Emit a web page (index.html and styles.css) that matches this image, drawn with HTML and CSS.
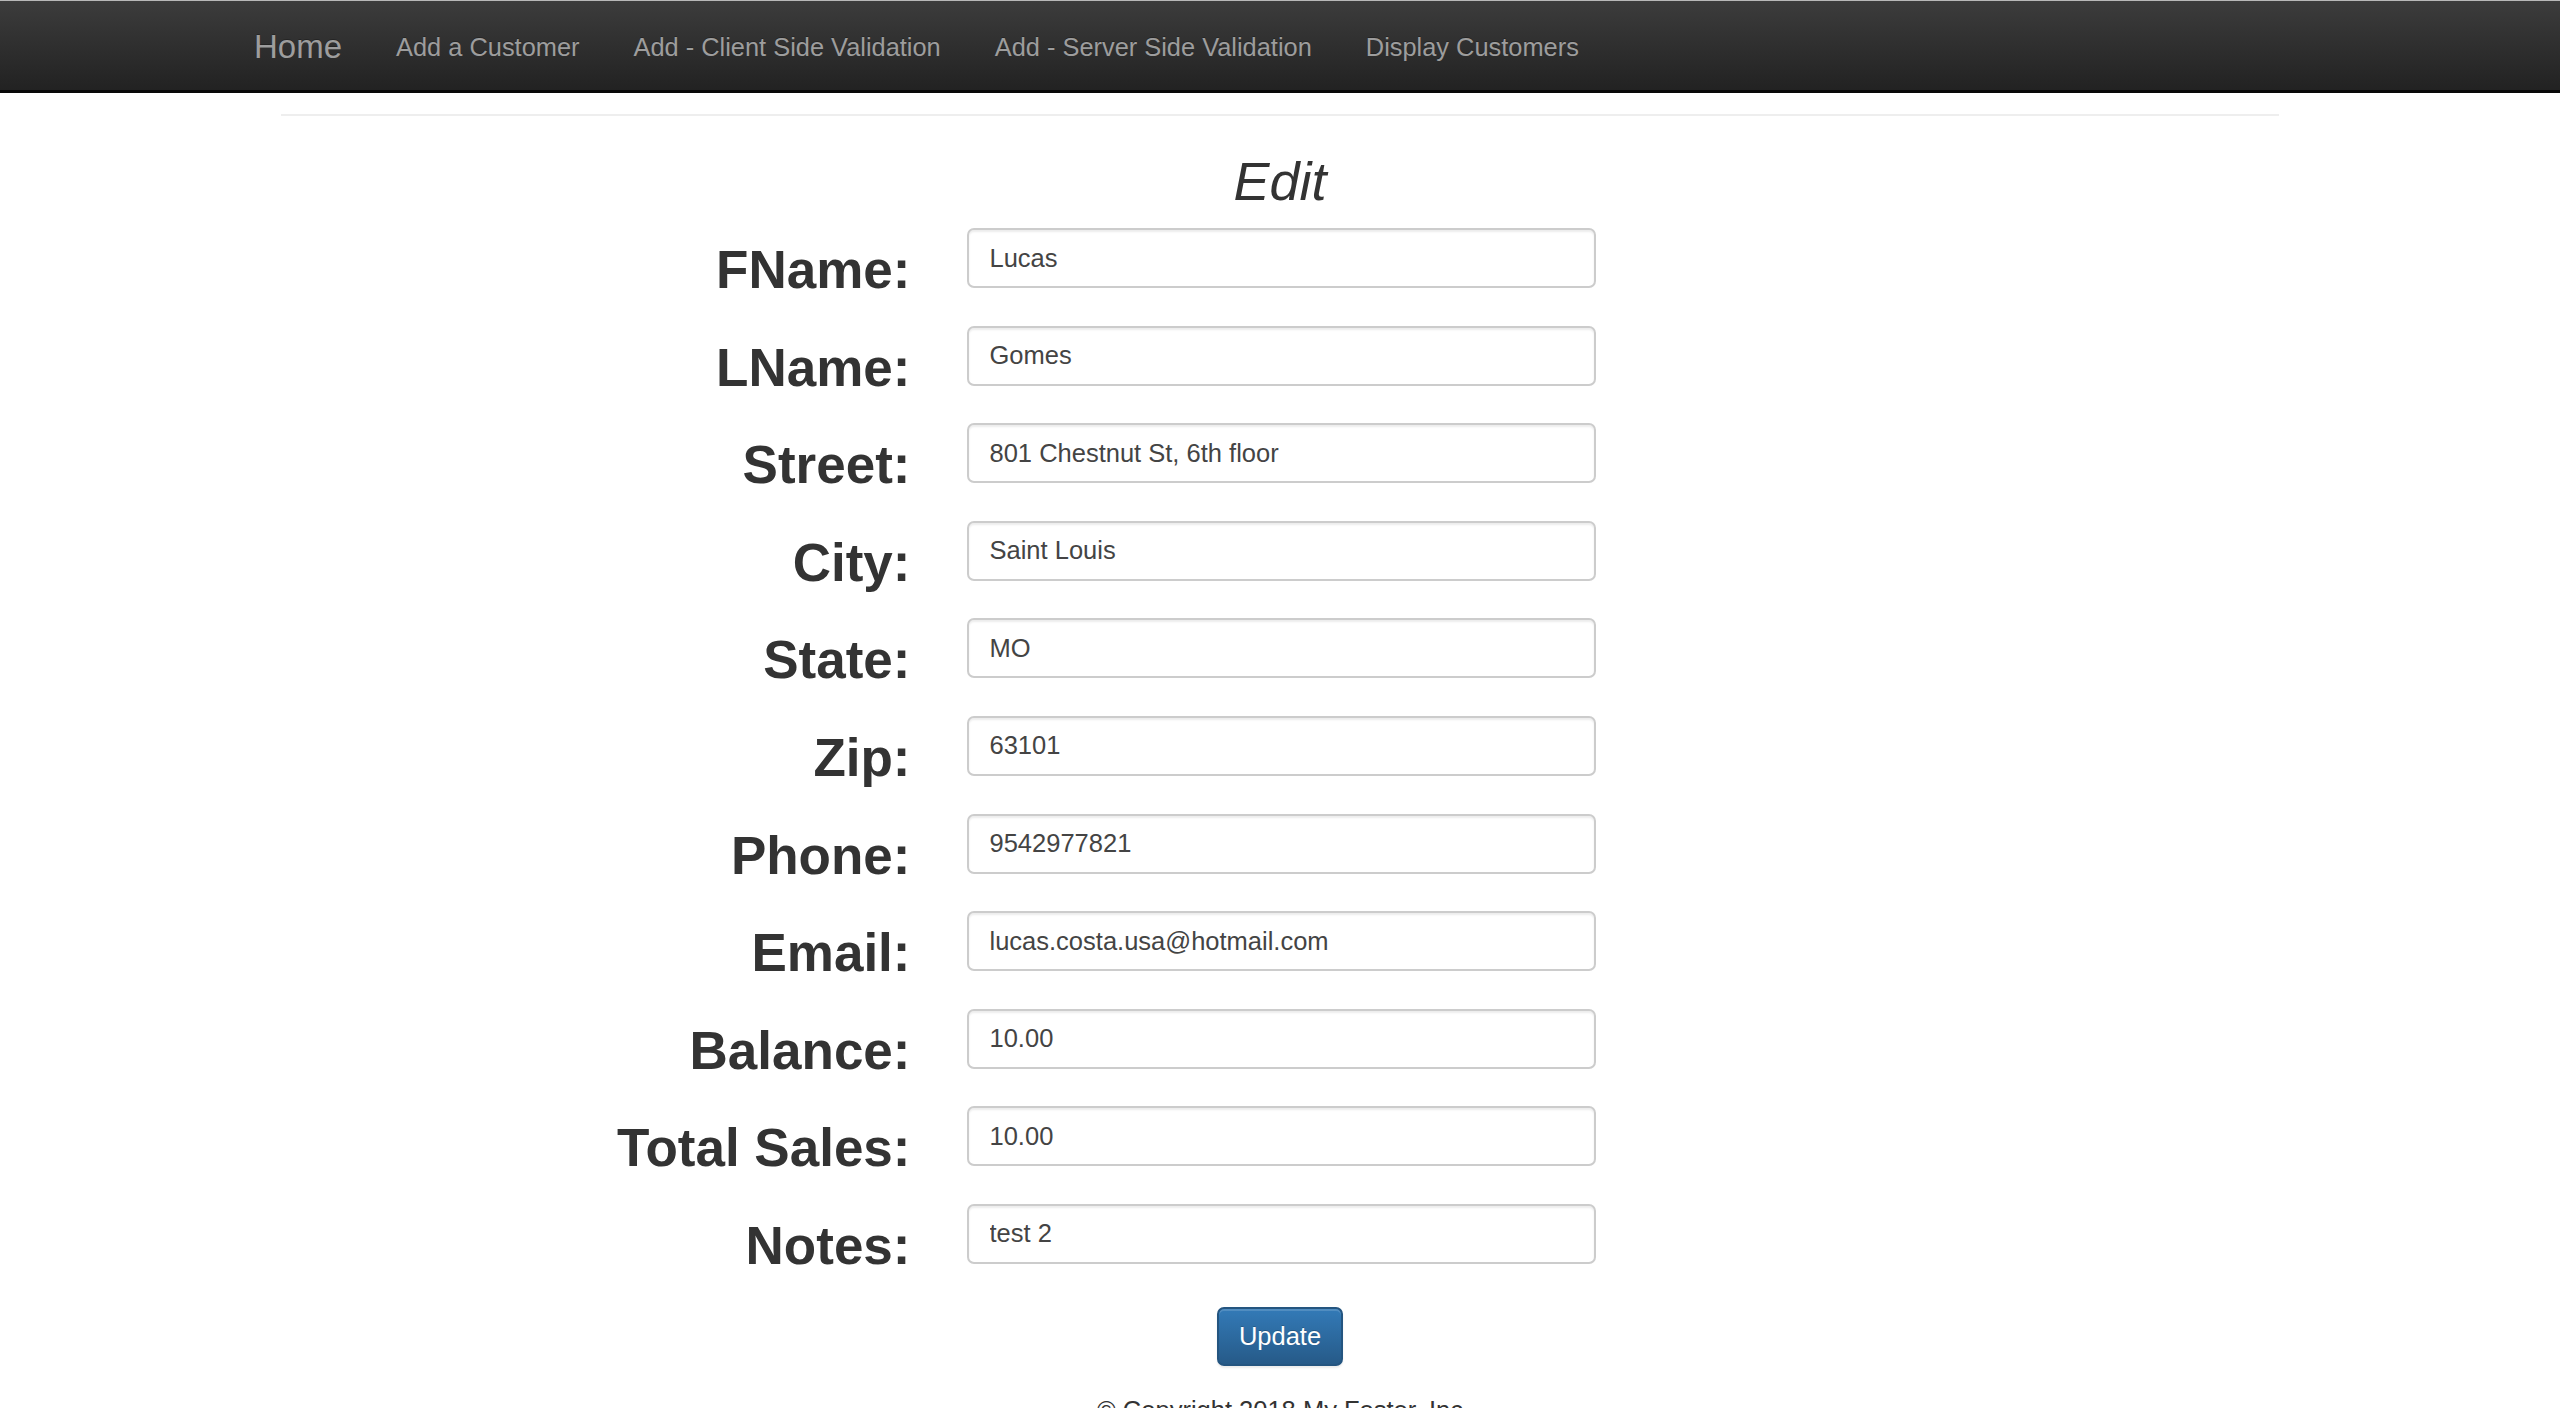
FILE: index.html
```html
<!DOCTYPE html>
<html lang="en">
<head>
<meta charset="utf-8">
<title>Edit</title>
<link rel="stylesheet" href="styles.css">
</head>
<body>
<nav class="navbar">
  <div class="nav-inner">
    <a class="brand" href="#">Home</a>
    <a class="nav-link" href="#">Add a Customer</a>
    <a class="nav-link" href="#">Add - Client Side Validation</a>
    <a class="nav-link" href="#">Add - Server Side Validation</a>
    <a class="nav-link" href="#">Display Customers</a>
  </div>
</nav>
<main class="page">
  <hr class="rule">
  <h2 class="title">Edit</h2>
  <form class="edit-form">
    <div class="row"><label class="lbl">FName:</label><input class="field" type="text" value="Lucas"></div>
    <div class="row"><label class="lbl">LName:</label><input class="field" type="text" value="Gomes"></div>
    <div class="row"><label class="lbl">Street:</label><input class="field" type="text" value="801 Chestnut St, 6th floor"></div>
    <div class="row"><label class="lbl">City:</label><input class="field" type="text" value="Saint Louis"></div>
    <div class="row"><label class="lbl">State:</label><input class="field" type="text" value="MO"></div>
    <div class="row"><label class="lbl">Zip:</label><input class="field" type="text" value="63101"></div>
    <div class="row"><label class="lbl">Phone:</label><input class="field" type="text" value="9542977821"></div>
    <div class="row"><label class="lbl">Email:</label><input class="field" type="text" value="lucas.costa.usa@hotmail.com"></div>
    <div class="row"><label class="lbl">Balance:</label><input class="field" type="text" value="10.00"></div>
    <div class="row"><label class="lbl">Total Sales:</label><input class="field" type="text" value="10.00"></div>
    <div class="row"><label class="lbl">Notes:</label><input class="field" type="text" value="test 2"></div>
    <div class="actions"><button class="btn" type="button">Update</button></div>
  </form>
  <footer class="footer">© Copyright 2018 My Foster, Inc</footer>
</main>
</body>
</html>
```

FILE: styles.css
```css
html, body {
  margin: 0;
  padding: 0;
  background: #fff;
}
body {
  font-family: "Liberation Sans", Arial, Helvetica, sans-serif;
  color: #333;
  width: 2560px;
  height: 1408px;
  overflow: hidden;
}
.navbar {
  box-sizing: border-box;
  height: 93px;
  border-top: 1px solid #b8b8b8;
  border-bottom: 3px solid #080808;
  background: linear-gradient(to bottom, #3c3c3c 0%, #222 100%);
}
.nav-inner {
  display: flex;
  align-items: flex-start;
  padding-left: 227px;
}
.brand, .nav-link {
  display: block;
  color: #9d9d9d;
  text-decoration: none;
  padding: 28px 27px 0;
  line-height: 36px;
  text-shadow: 0 -1px 0 rgba(0,0,0,.25);
}
.brand {
  font-size: 33px;
}
.nav-link {
  font-size: 25.4px;
}
.page {
  display: flex;
  flex-direction: column;
}
.rule {
  box-sizing: border-box;
  width: 1998px;
  height: 2px;
  margin: 21px 0 0 281px;
  border: 0;
  background: #eee;
}
.title {
  margin: 35px 0 0;
  text-align: center;
  font-size: 54px;
  font-style: italic;
  font-weight: normal;
  line-height: 60px;
  color: #333;
}
.edit-form {
  display: flex;
  flex-direction: column;
  gap: 37.6px;
  margin-top: 17px;
}
.row {
  display: grid;
  grid-template-columns: 1fr 627px 1fr;
  grid-template-rows: 60px;
  column-gap: 59px;
  align-items: start;
}
.lbl {
  box-sizing: border-box;
  text-align: right;
  font-size: 53px;
  font-weight: bold;
  line-height: 60px;
  padding-top: 12px;
  margin-right: -3px;
  color: #333;
  white-space: nowrap;
}
.field {
  box-sizing: border-box;
  width: 629px;
  height: 60px;
  margin: 0;
  padding: 0 21px;
  border: 2px solid #ccc;
  border-radius: 7px;
  box-shadow: inset 0 2px 2px rgba(0,0,0,.075);
  font-family: "Liberation Sans", Arial, Helvetica, sans-serif;
  font-size: 25.5px;
  color: #444;
  background: #fff;
  outline: none;
}
.actions {
  display: flex;
  justify-content: center;
  margin-top: 5px;
}
.btn {
  box-sizing: border-box;
  height: 59px;
  padding: 0 20px;
  border: 2px solid #245580;
  border-radius: 7px;
  background: linear-gradient(to bottom, #337ab7 0%, #265a88 100%);
  box-shadow: inset 0 2px 0 rgba(255,255,255,.15), 0 2px 2px rgba(0,0,0,.075);
  color: #fff;
  font-family: "Liberation Sans", Arial, Helvetica, sans-serif;
  font-size: 25.5px;
  line-height: 55px;
  text-shadow: 0 -1px 0 rgba(0,0,0,.2);
}
.footer {
  margin-top: 26px;
  text-align: center;
  font-size: 25.5px;
  line-height: 36px;
  color: #333;
}
```
